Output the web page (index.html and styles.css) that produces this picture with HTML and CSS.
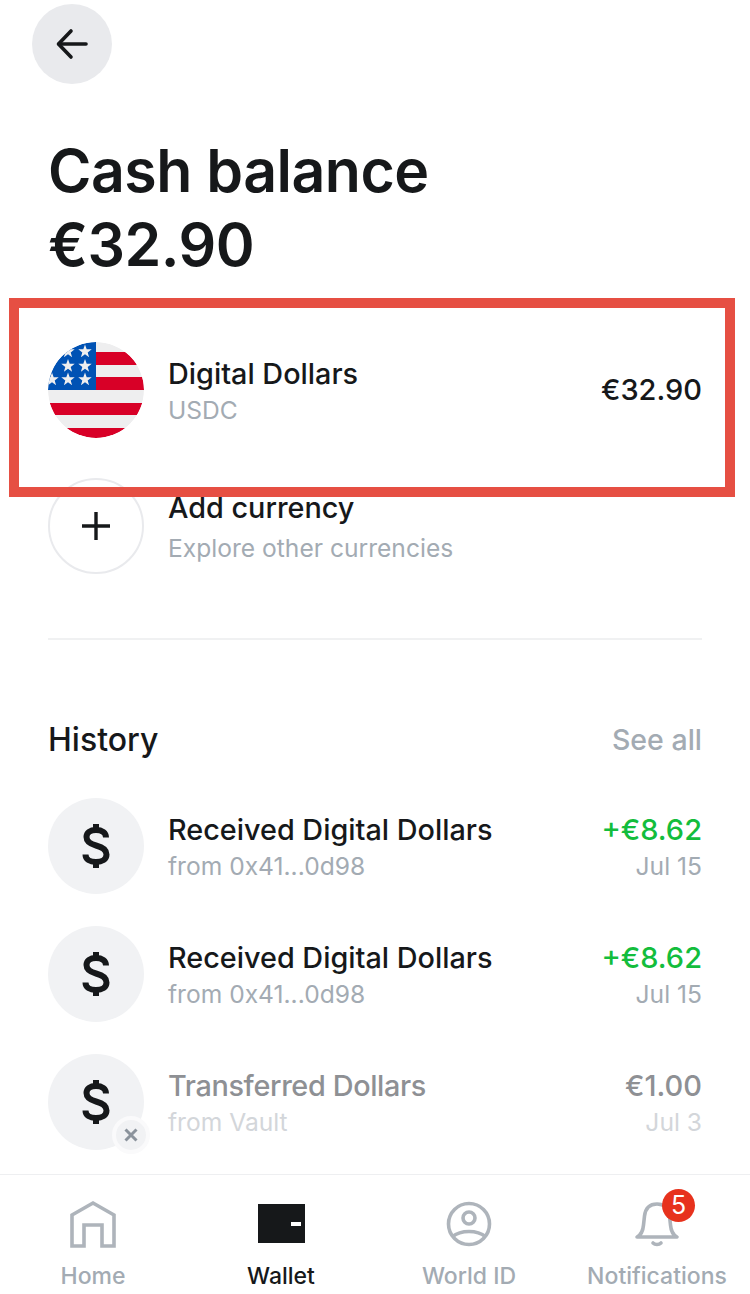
FILE: index.html
```html
<!DOCTYPE html>
<html lang="en">
<head>
  <meta charset="UTF-8" />
  <meta name="viewport" content="width=device-width, initial-scale=1" />
  <title>Cash balance</title>
  <link rel="stylesheet" href="styles.css">
</head>
<body>
  <div class="page">
    <div class="content">
      <button class="back-button">
        <svg width="36" height="36" viewBox="0 0 36 36" fill="none" stroke="#16181a" stroke-width="3.6" stroke-linecap="round" stroke-linejoin="round">
          <path d="M32 18H5"/>
          <path d="M17 5 L4.5 18 L17 31"/>
        </svg>
      </button>

      <h1 class="title">Cash balance<br>€32.90</h1>

      <div class="currency-list">
        <div class="row">
          <svg class="avatar" width="96" height="96" viewBox="0 0 96 96">
            <defs>
              <clipPath id="flagClip"><circle cx="48" cy="48" r="48"/></clipPath>
              <polygon id="star" points="0,-7 1.7,-2.2 6.7,-2.2 2.700,0.900 4.100,5.800 0,2.800 -4.100,5.800 -2.700,0.900 -6.700,-2.200 -1.700,-2.200"/>
            </defs>
            <g clip-path="url(#flagClip)">
              <rect width="96" height="96" fill="#eeeeef"/>
              <rect x="48" y="10" width="48" height="13" fill="#d80027"/>
              <rect x="48" y="35" width="48" height="13" fill="#d80027"/>
              <rect y="61" width="96" height="12" fill="#d80027"/>
              <rect y="86" width="96" height="10" fill="#d80027"/>
              <rect width="48" height="48" fill="#0052b4"/>
              <g fill="#eeeeef">
                <use href="#star" x="37" y="9.500"/>
                <use href="#star" x="37" y="24"/>
                <use href="#star" x="37" y="37.500"/>
                <use href="#star" x="20" y="9.500"/>
                <use href="#star" x="20" y="24"/>
                <use href="#star" x="20" y="37.500"/>
                <use href="#star" x="4" y="37.500"/>
              </g>
            </g>
          </svg>
          <div class="row-text">
            <div class="row-name">Digital Dollars</div>
            <div class="row-sub">USDC</div>
          </div>
          <div class="row-amount">€32.90</div>
        </div>

        <div class="row">
          <div class="avatar add-icon">
            <svg width="30" height="30" viewBox="0 0 30 30" stroke="#16181a" stroke-width="3.4">
              <path d="M15 1V29M1 15H29"/>
            </svg>
          </div>
          <div class="row-text add-text">
            <div class="row-name">Add currency</div>
            <div class="row-sub">Explore other currencies</div>
          </div>
        </div>
      </div>

      <div class="divider"></div>

      <div class="history-head">
        <h2>History</h2>
        <span>See all</span>
      </div>

      <div class="history-list">
        <div class="row">
          <div class="avatar dollar-icon">
            <svg width="28" height="44" viewBox="0 0 28 44" fill="none" stroke="#16181a" stroke-width="6">
              <path d="M24 13.500C24 8.500 20 6 14 6C8 6 4.500 8.500 4.500 13C4.500 18 8.500 20 14 21.500C20 23 24.500 25 24.500 30.500C24.500 35.500 20 38 14 38C8 38 3.500 35.500 3.500 30.500"/>
              <path d="M14 0V6M14 38V44"/>
            </svg>
          </div>
          <div class="row-text">
            <div class="row-name">Received Digital Dollars</div>
            <div class="row-sub">from 0x41...0d98</div>
          </div>
          <div class="row-side">
            <div class="row-amount green">+€8.62</div>
            <div class="row-sub">Jul 15</div>
          </div>
        </div>

        <div class="row">
          <div class="avatar dollar-icon">
            <svg width="28" height="44" viewBox="0 0 28 44" fill="none" stroke="#16181a" stroke-width="6">
              <path d="M24 13.500C24 8.500 20 6 14 6C8 6 4.500 8.500 4.500 13C4.500 18 8.500 20 14 21.500C20 23 24.500 25 24.500 30.500C24.500 35.500 20 38 14 38C8 38 3.500 35.500 3.500 30.500"/>
              <path d="M14 0V6M14 38V44"/>
            </svg>
          </div>
          <div class="row-text">
            <div class="row-name">Received Digital Dollars</div>
            <div class="row-sub">from 0x41...0d98</div>
          </div>
          <div class="row-side">
            <div class="row-amount green">+€8.62</div>
            <div class="row-sub">Jul 15</div>
          </div>
        </div>

        <div class="row failed">
          <div class="avatar dollar-icon">
            <svg width="28" height="44" viewBox="0 0 28 44" fill="none" stroke="#16181a" stroke-width="6">
              <path d="M24 13.500C24 8.500 20 6 14 6C8 6 4.500 8.500 4.500 13C4.500 18 8.500 20 14 21.500C20 23 24.500 25 24.500 30.500C24.500 35.500 20 38 14 38C8 38 3.500 35.500 3.500 30.500"/>
              <path d="M14 0V6M14 38V44"/>
            </svg>
            <span class="status-badge">
              <svg width="14" height="14" viewBox="0 0 14 14" stroke="#8b939c" stroke-width="3">
                <path d="M1.500 1.500L12.500 12.500M12.500 1.500L1.500 12.500"/>
              </svg>
            </span>
          </div>
          <div class="row-text">
            <div class="row-name">Transferred Dollars</div>
            <div class="row-sub">from Vault</div>
          </div>
          <div class="row-side">
            <div class="row-amount">€1.00</div>
            <div class="row-sub">Jul 3</div>
          </div>
        </div>
      </div>
    </div>

    <nav class="tabbar">
      <div class="tab">
        <svg width="48" height="48" viewBox="0 0 48 48" fill="none" stroke="#aeb4bb" stroke-width="3.6">
          <path d="M3 46V15L24 3L45 15V46H33V25H15V46Z"/>
        </svg>
        <span>Home</span>
      </div>
      <div class="tab active">
        <svg width="48" height="48" viewBox="0 0 48 48">
          <rect x="1" y="4" width="47" height="39" fill="#16181a"/>
          <rect x="34" y="22" width="10" height="4" fill="#fff"/>
        </svg>
        <span>Wallet</span>
      </div>
      <div class="tab">
        <svg width="48" height="48" viewBox="0 0 48 48" fill="none" stroke="#aeb4bb" stroke-width="3.6">
          <circle cx="24" cy="24" r="20.500"/>
          <circle cx="24" cy="18" r="6"/>
          <path d="M7 37C12 33 18 31.500 24 31.500C30 31.500 36 33 41 37"/>
        </svg>
        <span>World ID</span>
      </div>
      <div class="tab">
        <div class="bell">
          <svg width="48" height="48" viewBox="0 0 48 48" fill="none" stroke="#aeb4bb" stroke-width="3.6" stroke-linecap="round" stroke-linejoin="round">
            <path d="M4 37C8 35 10 31 10.500 25L11.500 16C12.500 8 17 4 24 4C31 4 35.500 8 36.500 16L37.500 25C38 31 40 35 44 37Z"/>
            <path d="M20 43C22 45 26 45 28 43"/>
          </svg>
          <span class="bell-count">5</span>
        </div>
        <span>Notifications</span>
      </div>
    </nav>

    <div class="highlight"></div>
  </div>
</body>
</html>
```

FILE: styles.css
```css
* {
  box-sizing: border-box;
}
body {
  margin: 0;
  background: #fff;
  font-family: Inter, 'Noto Sans', sans-serif;
  color: #16181a;
}
.page {
  position: relative;
  width: 750px;
  height: 1294px;
  overflow: hidden;
  display: flex;
  flex-direction: column;
}
.content {
  flex: 1;
  padding: 4px 48px 0 48px;
}
.back-button {
  display: flex;
  align-items: center;
  justify-content: center;
  width: 80px;
  height: 80px;
  margin-left: -16px;
  padding: 0;
  border: none;
  border-radius: 50%;
  background: #e9eaed;
}
.title {
  margin: 50px 0 0;
  font-size: 59px;
  line-height: 74px;
  font-weight: 600;
  letter-spacing: -0.5px;
}
.currency-list {
  display: flex;
  flex-direction: column;
  gap: 40px;
  margin-top: 60px;
}
.row {
  display: flex;
  align-items: center;
  height: 96px;
}
.avatar {
  position: relative;
  flex: none;
  width: 96px;
  height: 96px;
  border-radius: 50%;
}
.add-icon {
  display: flex;
  align-items: center;
  justify-content: center;
  border: 2px solid #e9eaed;
}
.dollar-icon {
  display: flex;
  align-items: center;
  justify-content: center;
  background: #f1f2f4;
}
.row-text {
  flex: 1;
  margin: 4px 0 0 24px;
}
.add-text .row-name {
  margin-bottom: 4px;
}
.row-name {
  font-size: 28.8px;
  line-height: 36px;
  font-weight: 500;
}
.row-sub {
  font-size: 24.6px;
  line-height: 36px;
  color: #a3abb3;
}
.row-amount {
  font-size: 29px;
  line-height: 36px;
  font-weight: 500;
}
.row-side {
  margin-top: 4px;
  text-align: right;
}
.green {
  color: #13bd3c;
}
.divider {
  height: 2px;
  margin-top: 64px;
  background: #f0f1f2;
}
.history-head {
  display: flex;
  align-items: center;
  justify-content: space-between;
  margin-top: 79px;
  height: 40px;
}
.history-head h2 {
  margin: 0;
  font-size: 32px;
  font-weight: 500;
}
.history-head span {
  font-size: 28.5px;
  font-weight: 500;
  color: #a3abb3;
}
.history-list {
  display: flex;
  flex-direction: column;
  gap: 32px;
  margin-top: 39px;
}
.failed .row-name,
.failed .row-amount {
  color: #8e9094;
}
.failed .row-name {
  letter-spacing: -0.35px;
}
.failed .row-sub {
  color: #d3d6da;
}
.status-badge {
  position: absolute;
  right: -6px;
  bottom: -4px;
  display: flex;
  align-items: center;
  justify-content: center;
  width: 38px;
  height: 38px;
  border: 4px solid #fafafb;
  border-radius: 50%;
  background: #f1f2f4;
}
.tabbar {
  display: grid;
  grid-template-columns: repeat(4, 188px);
  height: 120px;
  margin-left: -1px;
  padding-top: 25px;
  border-top: 1px solid #eeeff1;
}
.tab {
  display: flex;
  flex-direction: column;
  align-items: center;
  gap: 12px;
  font-size: 23px;
  line-height: 32px;
  font-weight: 500;
  color: #a3abb3;
  white-space: nowrap;
}
.tab.active {
  color: #16181a;
}
.bell {
  position: relative;
  height: 48px;
}
.bell-count {
  position: absolute;
  top: -11px;
  right: -14px;
  width: 33px;
  height: 33px;
  border-radius: 50%;
  background: #e7321d;
  color: #fff;
  font-size: 25px;
  line-height: 33px;
  font-weight: 400;
  text-align: center;
}
.highlight {
  position: absolute;
  left: 9px;
  top: 298px;
  width: 726px;
  height: 199px;
  border: 10px solid #e64f43;
}
```
